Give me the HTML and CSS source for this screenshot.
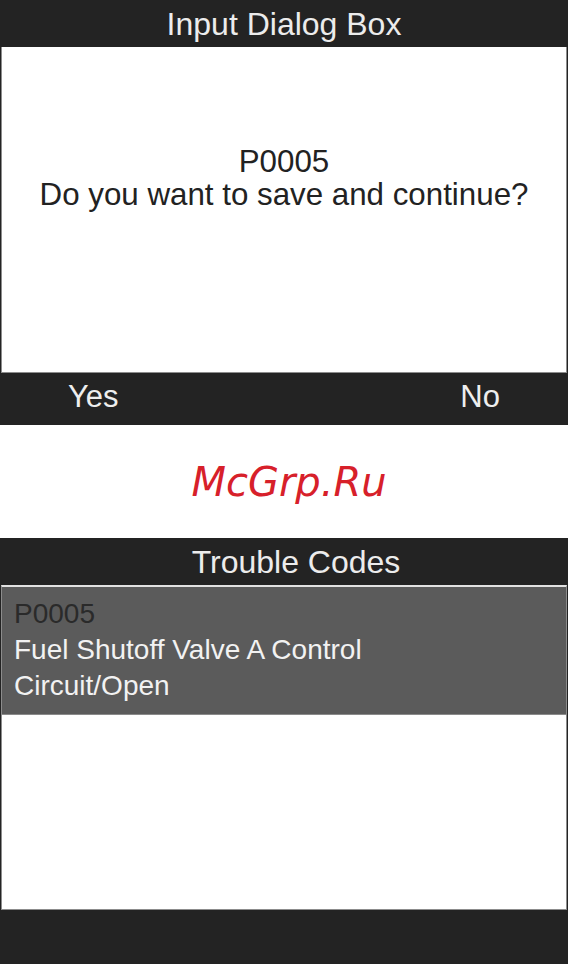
FILE: index.html
```html
<!DOCTYPE html>
<html>
<head>
<meta charset="utf-8">
<link rel="stylesheet" href="styles.css">
</head>
<body>
<div class="page">
  <section class="panel dialog">
    <div class="title">Input Dialog Box</div>
    <div class="dialog-body">
      <div class="msg">P0005</div>
      <div class="msg">Do you want to save and continue?</div>
    </div>
    <div class="buttons">
      <span>Yes</span>
      <span>No</span>
    </div>
  </section>
  <div class="mark">McGrp.Ru</div>
  <section class="panel codes">
    <div class="title">Trouble Codes</div>
    <div class="list">
      <div class="row selected">
        <div class="code">P0005</div>
        <div class="desc">Fuel Shutoff Valve A Control</div>
        <div class="desc">Circuit/Open</div>
      </div>
    </div>
    <div class="footer"></div>
  </section>
</div>
</body>
</html>
```
FILE: styles.css
```css
html, body {
  margin: 0;
  padding: 0;
  background: #ffffff;
}
.page {
  width: 568px;
  display: flex;
  flex-direction: column;
  font-family: "Liberation Sans", Arial, sans-serif;
}
.panel {
  background: #232323;
  display: flex;
  flex-direction: column;
}
.title {
  height: 47px;
  line-height: 49px;
  font-size: 32px;
  color: #ececec;
  text-align: center;
}
.dialog-body {
  height: 227px;
  margin: 0 1px;
  border: 1px solid #8c8c8c;
  border-top: none;
  background: #ffffff;
  padding-top: 98px;
  text-align: center;
  color: #222222;
}
.msg {
  font-size: 31.3px;
  line-height: 33px;
}
.buttons {
  height: 52px;
  display: flex;
  justify-content: space-between;
  align-items: flex-start;
  padding: 0 68px;
}
.buttons span {
  font-size: 31px;
  line-height: 34px;
  padding-top: 7px;
  color: #eeeeee;
}
.mark {
  height: 79px;
  padding: 34px 0 0 10px;
  text-align: center;
  font-family: "DejaVu Sans", sans-serif;
  font-style: italic;
  font-size: 40px;
  line-height: 46px;
  color: #d7202a;
}
.codes .title {
  height: 47px;
  padding-left: 24px;
}
.list {
  height: 322px;
  margin: 0 1px;
  border-top: 2px solid #e2e2e2;
  border-left: 1px solid #8c8c8c;
  border-right: 1px solid #8c8c8c;
  border-bottom: 1px solid #8c8c8c;
  background: #ffffff;
}
.row {
  height: 118px;
  padding: 9px 12px 0;
  font-size: 28px;
  line-height: 36px;
}
.row.selected {
  background: #5b5b5b;
  border-bottom: 1px solid #8a8a8a;
}
.code {
  color: #2a2a2a;
}
.desc {
  color: #f2f2f2;
}
.footer {
  height: 54px;
}
```
